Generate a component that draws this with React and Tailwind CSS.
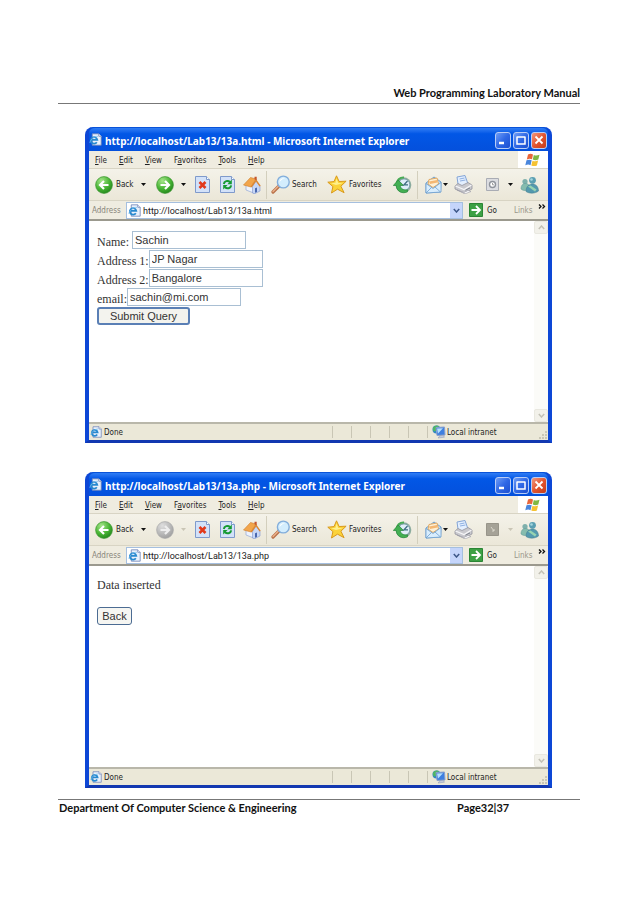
import { useId } from "react";

const menus = [
  ["", "F", "ile"],
  ["", "E", "dit"],
  ["", "V", "iew"],
  ["F", "a", "vorites"],
  ["", "T", "ools"],
  ["", "H", "elp"],
];

function PageIcon({ className }) {
  return (
    <svg viewBox="0 0 16 16" className={className} aria-hidden="true">
      <path d="M4 1h8l3 3v11H4z" fill="#e9f1fc" stroke="#6f83b5" />
      <path d="M12 1v3h3" fill="#fff" stroke="#6f83b5" />
      <path d="M9.6 11.4a4 4 0 1 1 .6-3H3.5" fill="none" stroke="#2889cf" strokeWidth="2.2" />
      <path d="M1 12c1-4 5-8 10-8" fill="none" stroke="#76bdec" strokeWidth="1" />
    </svg>
  );
}

function ArrowBall({ forward, disabled }) {
  const id = useId();
  return (
    <svg viewBox="0 0 18 18" className="size-[18px]" aria-hidden="true">
      <defs>
        <radialGradient id={id} cx=".35" cy=".25" r=".85">
          <stop offset="0" stopColor={disabled ? "#dedede" : "#a5e58a"} />
          <stop offset=".55" stopColor={disabled ? "#b9b9b9" : "#49b535"} />
          <stop offset="1" stopColor={disabled ? "#999" : "#1c7f18"} />
        </radialGradient>
      </defs>
      <circle cx="9" cy="9" r="8.4" fill={`url(#${id})`} stroke={disabled ? "#aaa" : "#3d9632"} strokeWidth=".7" />
      <path
        d={forward ? "M4.5 9h8M9 5l4 4-4 4" : "M13.5 9h-8M9 5L5 9l4 4"}
        fill="none"
        stroke={disabled ? "#eee" : "#fff"}
        strokeWidth="2.2"
      />
    </svg>
  );
}

function Caret({ className = "", muted }) {
  return (
    <svg viewBox="0 0 5 3" className={`h-[3px] w-[5px] shrink-0 ${className}`} aria-hidden="true">
      <path d="M0 0h5L2.5 3z" fill={muted ? "#c9c5b5" : "#111"} />
    </svg>
  );
}

function StopIcon() {
  return (
    <svg viewBox="0 0 15 17" className="h-[17px] w-[15px]" aria-hidden="true">
      <path d="M.5.5h11l3 3v13H.5z" fill="#d3e2f9" stroke="#7f9acb" />
      <path d="M11.5.5v3h3" fill="#fff" stroke="#7f9acb" />
      <path d="M4.5 6l6 6M10.5 6l-6 6" stroke="#e2391b" strokeWidth="2.6" />
    </svg>
  );
}

function RefreshIcon() {
  return (
    <svg viewBox="0 0 15 17" className="h-[17px] w-[15px]" aria-hidden="true">
      <path d="M.5.5h11l3 3v13H.5z" fill="#d3e2f9" stroke="#7f9acb" />
      <path d="M11.5.5v3h3" fill="#fff" stroke="#7f9acb" />
      <path d="M3.8 8c.5-3 4-4 6.2-2M11.2 9.3c-.5 3-4 4-6.2 2" fill="none" stroke="#159a32" strokeWidth="2" />
      <path d="M11.8 3.6v4.6H7.4zM3.2 13.6V9h4.4z" fill="#159a32" />
    </svg>
  );
}

function HomeIcon() {
  return (
    <svg viewBox="0 0 18 18" className="size-[18px]" aria-hidden="true">
      <path d="M3 8.500l5-3.500 4 5v7.500L3 14z" fill="#eef3fd" stroke="#93a7d5" strokeWidth=".7" />
      <path d="M9.500 10.500L13 5l4 5v5l-5.500 2.700-2-.7z" fill="#c8d7f5" stroke="#7f96cd" strokeWidth=".6" />
      <path d="M.5 9L7.500 1.500 13 3 8 11z" fill="#f2a54b" stroke="#cf7d2b" strokeWidth=".6" />
      <path d="M13 3l4.700 6.800-1.200.7L13 5.600l-4.300 6-1-.9z" fill="#dd8630" />
      <path d="M11.500.8h2.200v3.400l-2.200-1z" fill="#c4562c" />
      <path d="M12 12.200l2-.8v4.600l-2 .8z" fill="#4a68ae" />
    </svg>
  );
}

function SearchIcon() {
  return (
    <svg viewBox="0 0 20 19" className="h-[19px] w-5" aria-hidden="true">
      <path d="M8.500 10.500l-6.500 6.500" stroke="#b9724a" strokeWidth="3.200" strokeLinecap="round" />
      <path d="M8 10.500l-6 6" stroke="#eeb48c" strokeWidth="1.200" strokeLinecap="round" />
      <circle cx="12.300" cy="7" r="5.900" fill="#d3edfd" stroke="#83aedb" strokeWidth="1.400" />
      <path d="M8.500 7c0-3 3-4.500 5.500-3.500-2 .2-4 1.500-5.500 3.500z" fill="#fff" />
    </svg>
  );
}

function StarIcon() {
  return (
    <svg viewBox="0 0 20 19" className="h-[19px] w-5" aria-hidden="true">
      <path
        d="M9.500.8l2.600 5.700 7-.3-5.200 5 3.200 6.500-6.600-3.500L4.500 18l1.400-6.400L.8 7.200l6.200-.6z"
        fill="#fbd33a"
        stroke="#d9991c"
        strokeLinejoin="round"
      />
      <path d="M9.500 3.500l1.800 4.500 4.700.3-7 1.700-5-1.700 4.500-.6z" fill="#fff08e" />
    </svg>
  );
}

function HistoryIcon() {
  return (
    <svg viewBox="0 0 19 18" className="h-[18px] w-[19px]" aria-hidden="true">
      <circle cx="10.500" cy="9" r="7.800" fill="#8fae9f" />
      <circle cx="11" cy="8.700" r="5.800" fill="#dfeef8" stroke="#6f97a5" strokeWidth=".8" />
      <path d="M3.500 9C3.500 4 7 1.200 11 1.500" fill="none" stroke="#48ab55" strokeWidth="2.200" />
      <path d="M14.500 15.800C9 18.500 3.300 15 3.200 9.500H.3L5.200 4l5.300 5.500H7.200c.3 3 3.300 5 7.300 4.300z" fill="#43af52" stroke="#25853a" strokeWidth=".7" />
      <path d="M14.500 5L11 8.800h4" fill="none" stroke="#3d6e80" strokeWidth="1.300" />
    </svg>
  );
}

function MailIcon() {
  return (
    <svg viewBox="0 0 17 18" className="h-[18px] w-[17px]" aria-hidden="true">
      <path d="M1 7l8-6 7 5-.5 10L1 17z" fill="#bcdcf7" stroke="#6f9fce" />
      <path d="M3 8l1-4.500L12 2l1.500 6L8 11.500z" fill="#fdf0d6" stroke="#e2a960" />
      <path d="M4 5.500l8-1.500.5 2.500L5 8z" fill="#f4b772" />
      <path d="M1 7.500l7 5 8-6V16L1 17z" fill="#d8edfd" stroke="#6f9fce" strokeWidth=".8" />
      <path d="M1 17l5.500-5.500M15.500 16L10 11" stroke="#6f9fce" strokeWidth=".8" />
    </svg>
  );
}

function PrinterIcon() {
  return (
    <svg viewBox="0 0 19 19" className="size-[19px]" aria-hidden="true">
      <path d="M4 9L3 2l8-1.500L14 9l-6 3z" fill="#e3efff" stroke="#83a4d6" />
      <path d="M5.500 4l5-1M6 6l5.500-1" stroke="#8fb0e2" />
      <path d="M1 11l3-2.500 4 2 6-3 4 2.500V14L10 18l-9-4z" fill="#c9c9ce" stroke="#94949e" strokeWidth=".8" />
      <path d="M1.500 11l8.500 3.500 7.500-4.500" fill="none" stroke="#f6f6f8" strokeWidth="1.300" />
      <path d="M3 15l7 2.500 4-2 3 1-6 2.300z" fill="#fff" stroke="#9a9aa4" strokeWidth=".6" />
      <path d="M11.500 15.200l4.500-2.300" stroke="#7a7f8a" />
    </svg>
  );
}

function DiscussIcon({ disabled }) {
  return (
    <svg viewBox="0 0 13 13" className="size-[13px]" aria-hidden="true">
      <path d="M.5.5h12v12H.5z" fill={disabled ? "#a5a297" : "#dcdde1"} stroke={disabled ? "#98958a" : "#a9acb4"} />
      {disabled ? (
        <path d="M5 4l3 4M8 6v2H6" fill="none" stroke="#d9d6cb" />
      ) : (
        <>
          <circle cx="6.500" cy="6.500" r="3" fill="#fff" stroke="#8f939b" strokeWidth="1.400" />
          <path d="M6.500 5v1.800H8" fill="none" stroke="#888" strokeWidth=".8" />
        </>
      )}
    </svg>
  );
}

function MessengerIcon() {
  return (
    <svg viewBox="0 0 19 18" className="h-[18px] w-[19px]" aria-hidden="true">
      <circle cx="5" cy="5.500" r="2.600" fill="#7fb0ac" />
      <path d="M1 13c0-4 2-5.500 4.500-5.500S10 9 10 13.500C7 15 3 15 1 13z" fill="#86bcae" stroke="#5b9494" strokeWidth=".5" />
      <circle cx="12.500" cy="4.300" r="3.400" fill="#5b9fb2" />
      <path d="M6 15.500c0-5.500 3.500-7.500 6.500-7.500s6 2.500 6 7c-3 2.500-9 3-12.500.5z" fill="#5499ae" stroke="#427b8c" strokeWidth=".5" />
      <path d="M8 10.500l7 5 1.500-2-6-4z" fill="#97d3b1" />
      <circle cx="11.500" cy="3.500" r="1.300" fill="#a5d6de" />
    </svg>
  );
}

function WindowsFlag() {
  return (
    <svg viewBox="0 0 16 14" className="h-[14px] w-4" aria-hidden="true">
      <path d="M3 1.500c2-1 3.500-.8 5 0L7 6.300c-1.600-.8-3-.8-5.200.1z" fill="#e8663a" />
      <path d="M8.800 1.900c2 .8 3.500.6 5.700-.2l-1.200 4.900c-2 .8-3.500.9-5.500 0z" fill="#7fb842" />
      <path d="M1.500 7.300c2-.9 3.500-.9 5.200 0l-1.200 4.900c-1.500-.8-3-.8-5.200 0z" fill="#4a86dc" />
      <path d="M7.500 7.700c2 .8 3.500.7 5.600-.1L11.900 12.400c-2 .9-3.600.9-5.600 0z" fill="#f5c232" />
    </svg>
  );
}

function GlobeIcon() {
  return (
    <svg viewBox="0 0 14 14" className="size-[14px]" aria-hidden="true">
      <circle cx="4.500" cy="4.500" r="4" fill="#2f86c8" />
      <path d="M.8 3c1.500-3 5-3 6-2L5 4l-1 2-2.500.5z" fill="#4fb764" />
      <path d="M4 2.500l8.500-.5.500 8-8 .5z" fill="#3f7fe0" stroke="#8aa0cc" />
      <path d="M5 3.500l6-.3L6 8.500z" fill="#b5e0fb" />
      <path d="M6 13l6.500-.8-1.500-2-3 .5z" fill="#c3cbdc" stroke="#8c97b2" strokeWidth=".5" />
    </svg>
  );
}

function Chevron({ up, className }) {
  return (
    <svg viewBox="0 0 7 5" className={className} aria-hidden="true">
      <path d={up ? "M.8 4l2.700-3 2.700 3" : "M.8 1l2.700 3 2.700-3"} fill="none" stroke="currentColor" strokeWidth="1.500" />
    </svg>
  );
}

function CaptionButton({ label, close, children }) {
  return (
    <button
      type="button"
      aria-label={label}
      className={`flex h-[17px] w-4 items-center justify-center rounded-[3px] border border-[#b9cdf6] bg-linear-to-br ${
        close ? "from-[#f0967c] via-[#e2552f] to-[#c53c19]" : "from-[#6f9cf5] via-[#2f68e6] to-[#1d4fd0]"
      }`}
    >
      <svg viewBox="0 0 12 12" className="size-3" fill="none" stroke="#fff" aria-hidden="true">
        {children}
      </svg>
    </button>
  );
}

function TitleBar({ title }) {
  return (
    <header className="flex h-6 items-center rounded-t-md border-t border-[#0a53d8] bg-linear-to-b from-[#2f7df5] via-[#0257e6] via-25% to-[#0450dc] pr-px">
      <PageIcon className="size-[13px] shrink-0" />
      <h2 className="ml-[3px] grow truncate pt-[3px] font-['Noto_Sans',sans-serif] text-[10px] leading-4 font-bold text-white">{title}</h2>
      <div className="flex gap-[2px] pt-px">
        <CaptionButton label="Minimize">
          <path d="M2 9h5" strokeWidth="2.500" />
        </CaptionButton>
        <CaptionButton label="Maximize">
          <path d="M2 3h8M2 2.500v7.500h8V2.500" strokeWidth="1.500" />
        </CaptionButton>
        <CaptionButton label="Close" close>
          <path d="M2.500 2.500l7 7M9.500 2.500l-7 7" strokeWidth="1.800" />
        </CaptionButton>
      </div>
    </header>
  );
}

function MenuBar() {
  return (
    <nav className="flex h-[18px] border-b border-[#d8d4c4] bg-[#efece0]">
      <div className="flex grow items-center gap-3 pt-[2px] pl-[6px]">
        {menus.map(([before, key, after]) => (
          <button type="button" key={before + key + after}>
            {before}
            <span className="underline">{key}</span>
            {after}
          </button>
        ))}
      </div>
      <div className="flex w-[30px] items-center justify-center bg-white">
        <WindowsFlag />
      </div>
    </nav>
  );
}

function ToolButton({ label, className, children }) {
  return (
    <button type="button" aria-label={label} className={`flex shrink-0 items-center ${className}`}>
      {children}
    </button>
  );
}

function Divider() {
  return <div className="h-7 w-px shrink-0 bg-[#d3cfbd]" />;
}

function ToolBar({ canGoForward }) {
  return (
    <div className="flex h-8 items-center overflow-hidden border-b border-[#d8d4c4] bg-linear-to-b from-[#f4f2e9] to-[#ebe7d8] pl-[6px]">
      <ToolButton label="Back" className="w-[61px]">
        <ArrowBall />
        <span className="ml-[3px] w-[25px] text-left">Back</span>
        <Caret />
      </ToolButton>
      <ToolButton label="Forward" className="w-[39px]">
        <ArrowBall forward disabled={!canGoForward} />
        <Caret className="ml-[7px]" muted={!canGoForward} />
      </ToolButton>
      <ToolButton label="Stop" className="w-[25px]">
        <StopIcon />
      </ToolButton>
      <ToolButton label="Refresh" className="w-[23px]">
        <RefreshIcon />
      </ToolButton>
      <ToolButton label="Home" className="w-[23px]">
        <HomeIcon />
      </ToolButton>
      <Divider />
      <ToolButton label="Search" className="w-[60px] pl-1">
        <SearchIcon />
        <span className="ml-px">Search</span>
      </ToolButton>
      <ToolButton label="Favorites" className="w-[66px]">
        <StarIcon />
        <span className="ml-[2px]">Favorites</span>
      </ToolButton>
      <ToolButton label="History" className="w-6">
        <HistoryIcon />
      </ToolButton>
      <Divider />
      <ToolButton label="Mail" className="w-9 pl-[7px]">
        <MailIcon />
        <Caret className="ml-px" />
      </ToolButton>
      <ToolButton label="Print" className="w-8">
        <PrinterIcon />
      </ToolButton>
      <ToolButton label="Discuss" className="w-[34px]">
        <DiscussIcon disabled={!canGoForward} />
        <Caret className="ml-[9px]" muted={!canGoForward} />
      </ToolButton>
      <ToolButton label="Messenger" className="w-5">
        <MessengerIcon />
      </ToolButton>
    </div>
  );
}

function AddressBar({ url }) {
  const id = useId();
  return (
    <div className="flex h-5 items-center border-b-2 border-[#9b998e] bg-[#efece0] pl-[3px]">
      <label htmlFor={id} className="w-[34px] shrink-0 pt-px text-[#87857a]">
        Address
      </label>
      <div className="flex h-[17px] grow items-center border border-[#a5bfdf] bg-white pl-px">
        <PageIcon className="size-[13px] shrink-0" />
        <input
          id={id}
          type="text"
          defaultValue={url}
          className="ml-[2px] w-0 grow bg-transparent pt-px font-['Roboto',sans-serif] text-[9px] leading-[14px] outline-none"
        />
        <button type="button" aria-label="Show addresses" className="flex h-[15px] w-3 items-center justify-center bg-[#c5d5fb] text-[#3d5788]">
          <Chevron className="h-[5px] w-[7px]" />
        </button>
      </div>
      <button type="button" className="ml-[6px] flex w-[45px] shrink-0 items-center gap-1">
        <svg viewBox="0 0 14 14" className="size-[14px]" aria-hidden="true">
          <path d="M.5.5h13v13H.5z" fill="#3ca044" stroke="#2b8535" />
          <path d="M2.500 7h8M7 3l4 4-4 4" fill="none" stroke="#fff" strokeWidth="1.800" />
        </svg>
        <span className="pt-px">Go</span>
      </button>
      <button type="button" className="w-6 shrink-0 pt-px text-left text-[#98968a]">
        Links
      </button>
      <button type="button" aria-label="More links" className="flex h-4 w-[10px] shrink-0 items-start pt-[2px]">
        <svg viewBox="0 0 8 5" className="h-[5px] w-2" fill="none" stroke="#111" strokeWidth="1.300" aria-hidden="true">
          <path d="M1 .5l2 2-2 2M4.500.5l2 2-2 2" />
        </svg>
      </button>
    </div>
  );
}

function ScrollBar() {
  return (
    <div className="flex w-[14px] shrink-0 flex-col justify-between bg-[#fbfbf8] text-[#c3c1b6]">
      <button type="button" aria-label="Scroll up" className="flex h-[13px] items-center justify-center rounded-xs border border-[#e9e8e0] bg-[#f2f1ea]">
        <Chevron up className="h-[5px] w-[7px]" />
      </button>
      <button type="button" aria-label="Scroll down" className="flex h-[13px] items-center justify-center rounded-xs border border-[#e9e8e0] bg-[#f2f1ea]">
        <Chevron className="h-[5px] w-[7px]" />
      </button>
    </div>
  );
}

function StatusBar() {
  return (
    <footer className="flex h-[18px] items-center border-t-2 border-[#b9b7aa] bg-[#ebe8d8] pl-px">
      <PageIcon className="size-[12px]" />
      <span className="ml-[2px] grow pt-[2px]">Done</span>
      {[0, 1, 2, 3, 4].map((pane) => (
        <div key={pane} className="h-3 w-[19px] border-l border-[#c9c6b5]" />
      ))}
      <div className="flex h-3 w-[111px] items-center border-l border-[#c9c6b5] pl-1">
        <GlobeIcon />
        <span className="ml-px pt-[2px]">Local intranet</span>
      </div>
      <svg viewBox="0 0 10 10" className="size-[10px] self-end" fill="#c9c6b5" aria-hidden="true">
        <path d="M7 1h2v2H7zM4 4h2v2H4zM7 4h2v2H7zM1 7h2v2H1zM4 7h2v2H4zM7 7h2v2H7z" />
      </svg>
    </footer>
  );
}

function BrowserWindow({ title, url, canGoForward, children }) {
  return (
    <section className="flex flex-col rounded-t-lg border-x-4 border-b-[3px] border-x-[#0d47d6] border-b-[#1238b0] bg-[#0553dc] font-['DejaVu_Sans_Condensed','DejaVu_Sans',sans-serif] text-[8px] leading-3 text-[#222]">
      <TitleBar title={title} />
      <MenuBar />
      <ToolBar canGoForward={canGoForward} />
      <AddressBar url={url} />
      <div className="flex min-h-[201px] bg-white">
        <div className="grow pt-[10px] pl-2 font-['Liberation_Serif',serif] text-[12px] leading-[19px] text-[#333]">{children}</div>
        <ScrollBar />
      </div>
      <StatusBar />
    </section>
  );
}

function Field({ label, value, gap = "" }) {
  return (
    <label className="flex items-center">
      <span className="pt-1 leading-[14px]">{label}</span>
      <input
        type="text"
        defaultValue={value}
        className={`h-[18px] w-[114px] border border-[#a9bfd3] px-[2px] font-['Liberation_Sans',sans-serif] text-[11px] leading-[14px] text-[#333] ${gap}`}
      />
    </label>
  );
}

export default function App() {
  return (
    <div className="bg-white px-[58px] pt-[86px] pb-[88px] font-['Lato',sans-serif] text-[11px] leading-[14px] font-bold text-[#111]">
      <header className="border-b border-[#777] pb-[3px] text-right">Web Programming Laboratory Manual</header>
      <main className="flex flex-col gap-[29px] pt-[23px] pr-7 pb-[11px] pl-[27px] font-normal">
        <BrowserWindow title="http://localhost/Lab13/13a.html - Microsoft Internet Explorer" url="http://localhost/Lab13/13a.html" canGoForward>
          <form className="flex flex-col items-start gap-px" onSubmit={(event) => event.preventDefault()}>
            <Field label="Name:" value="Sachin" gap="ml-[3px]" />
            <Field label="Address 1:" value="JP Nagar" />
            <Field label="Address 2:" value="Bangalore" />
            <Field label="email:" value="sachin@mi.com" />
            <button
              type="submit"
              className="h-[18px] w-[93px] rounded-[3px] border-2 border-[#5a7fb5] bg-[#f3f3ee] font-['Liberation_Sans',sans-serif] text-[11px] leading-[14px]"
            >
              Submit Query
            </button>
          </form>
        </BrowserWindow>
        <BrowserWindow title="http://localhost/Lab13/13a.php - Microsoft Internet Explorer" url="http://localhost/Lab13/13a.php">
          <p>Data inserted</p>
          <button
            type="button"
            className="mt-3 block h-[18px] w-[35px] rounded-[3px] border border-[#4c6c93] bg-[#f6f6f2] font-['Liberation_Sans',sans-serif] text-[11px] leading-[14px]"
          >
            Back
          </button>
        </BrowserWindow>
      </main>
      <footer className="flex border-t border-[#777] pt-px pl-px">
        <span className="grow">Department Of Computer Science &amp; Engineering</span>
        <span className="w-[123px]">Page32|37</span>
      </footer>
    </div>
  );
}
